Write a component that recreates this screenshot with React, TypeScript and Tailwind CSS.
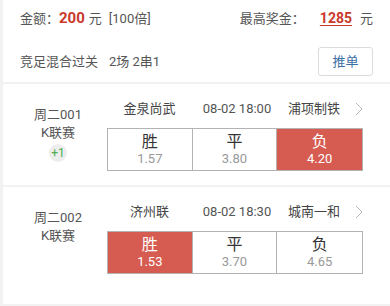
const font = "font-['Roboto','Noto_Sans_CJK_SC',sans-serif]";

type Odd = { label: string; value: string; picked: boolean };

type Match = {
  code: string;
  league: string;
  extra?: string;
  home: string;
  time: string;
  away: string;
  odds: Odd[];
  height: string;
};

const matches: Match[] = [
  {
    code: '周二001',
    league: 'K联赛',
    extra: '+1',
    home: '金泉尚武',
    time: '08-02 18:00',
    away: '浦项制铁',
    odds: [
      { label: '胜', value: '1.57', picked: false },
      { label: '平', value: '3.80', picked: false },
      { label: '负', value: '4.20', picked: true },
    ],
    height: 'h-[101px]',
  },
  {
    code: '周二002',
    league: 'K联赛',
    home: '济州联',
    time: '08-02 18:30',
    away: '城南一和',
    odds: [
      { label: '胜', value: '1.53', picked: true },
      { label: '平', value: '3.70', picked: false },
      { label: '负', value: '4.65', picked: false },
    ],
    height: 'h-[117px]',
  },
];

const Chevron = () => (
  <svg width="8" height="14" viewBox="0 0 8 14" fill="none" className="shrink-0">
    <path d="M1 1l6 6-6 6" stroke="#b8b8b8" strokeWidth="1" />
  </svg>
);

const MatchCard = ({ m }: { m: Match }) => (
  <div className={`bg-white flex ${m.height}`}>
    {/* 左侧赛事信息 */}
    <div className="w-[104px] pl-[6px] pt-[22px] flex flex-col items-center text-[13px] leading-[18px] text-[#555]">
      <span>{m.code}</span>
      <span>{m.league}</span>
      {m.extra && (
        <div className="mt-[2px] w-[18px] h-[18px] rounded-full bg-[#ededed] flex items-center justify-center text-[12px] text-[#4caf50]">
          {m.extra}
        </div>
      )}
    </div>

    {/* 对阵与赔率 */}
    <div className="w-[256px] pt-[16px] flex flex-col">
      <div className="flex items-center h-[18px] text-[13px] text-[#444]">
        <span className="w-[85px] text-center">{m.home}</span>
        <span className="w-[90px] text-center text-[#555]">{m.time}</span>
        <span className="w-[64px] text-center">{m.away}</span>
        <div className="ml-auto">
          <Chevron />
        </div>
      </div>
      <div className="mt-[10px] w-[256px] h-[43px] grid grid-cols-3 border border-[#b3b3b3] divide-x divide-[#b3b3b3]">
        {m.odds.map((o) => (
          <div
            key={o.label}
            className={`flex flex-col items-center justify-center ${o.picked ? 'bg-[#d65b50] text-white' : 'bg-white'}`}
          >
            <span className={`text-[16px] leading-[19px] ${o.picked ? 'text-white' : 'text-[#333]'}`}>{o.label}</span>
            <span className={`text-[13px] leading-[16px] ${o.picked ? 'text-white' : 'text-[#999]'}`}>{o.value}</span>
          </div>
        ))}
      </div>
    </div>
  </div>
);

export default function App() {
  return (
    <div className={`w-[390px] h-[306px] bg-[#f2f2f2] pl-[3px] flex flex-col overflow-hidden ${font}`}>
      {/* 投注信息 */}
      <div className="bg-white h-[82px] px-[17px] flex flex-col">
        <div className="h-[36px] flex items-center justify-between text-[13px] text-[#555]">
          <div className="flex items-baseline">
            <span>金额：</span>
            <span className="text-[15px] font-bold text-[#c9392c] mr-[4px]">200</span>
            <span>元</span>
            <span className="ml-[7px]">[100倍]</span>
          </div>
          <div className="flex items-baseline">
            <span>最高奖金：</span>
            <span className="ml-[15px] text-[14px] font-bold text-[#c9392c] underline underline-offset-2">1285</span>
            <span className="ml-[8px]">元</span>
          </div>
        </div>
        <div className="mt-[11px] flex items-center justify-between">
          <div className="text-[13px] text-[#555]">
            <span>竞足混合过关</span>
            <span className="ml-[11px]">2场 2串1</span>
          </div>
          <button className="w-[55px] h-[29px] border border-[#dcdcdc] rounded-[3px] bg-white text-[13px] text-[#3c6fa6]">
            推单
          </button>
        </div>
      </div>
      <div className="h-[2px] shrink-0" />
      <MatchCard m={matches[0]} />
      <div className="h-[2px] shrink-0" />
      <MatchCard m={matches[1]} />
    </div>
  );
}
